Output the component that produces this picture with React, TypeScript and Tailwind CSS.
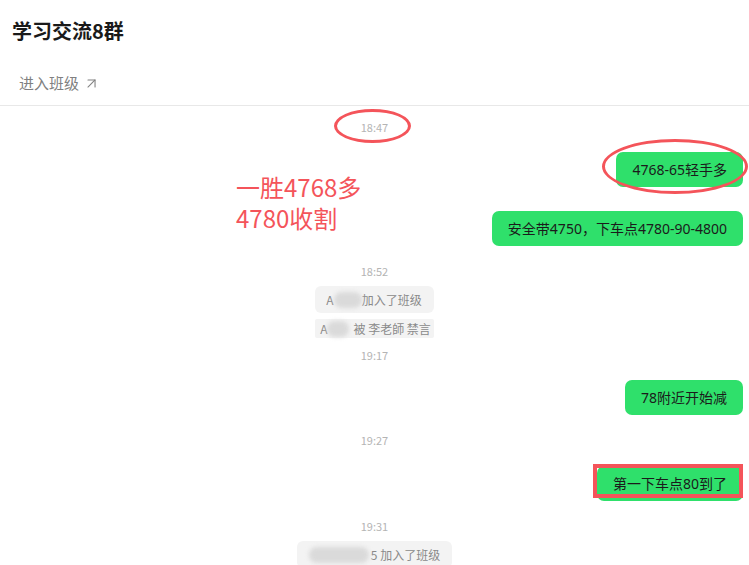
import { ArrowUpRight } from "lucide-react";

const font = { fontFamily: '"Noto Sans CJK SC", "Noto Sans", sans-serif' };
const bubbleFont = { fontFamily: '"Noto Sans", "Noto Sans CJK SC", sans-serif' };

function Time({ t, className = "" }: { t: string; className?: string }) {
  return (
    <div className={`text-center text-[11px] leading-4 text-[#b4b4b4] ${className}`}>{t}</div>
  );
}

function Bubble({ text, className = "" }: { text: string; className?: string }) {
  return (
    <div className={`flex justify-end pr-[6px] ${className}`}>
      <div
        className="flex h-[35px] items-center rounded-[7px] bg-[#2fe06b] px-[16px] text-[14px] text-[#1b1b1b]"
        style={bubbleFont}
      >
        {text}
      </div>
    </div>
  );
}

function Blur({ w }: { w: number }) {
  return (
    <span
      className="inline-block h-[16px] rounded-full bg-[#dadada] blur-[2px]"
      style={{ width: w }}
    />
  );
}

export default function App() {
  return (
    <div className="relative h-[565px] w-full overflow-hidden bg-white" style={font}>
      <div className="flex h-[62px] items-center pl-[12px] text-[20px] font-bold text-[#1a1a1a]">
        学习交流8群
      </div>
      <div className="flex h-[44px] items-center gap-1 border-b border-[#e8e8e8] pl-[19px] text-[15px] text-[#808080]">
        进入班级
        <ArrowUpRight size={17} strokeWidth={1.5} className="text-[#808080]" />
      </div>

      <div className="flex flex-col pt-[13px]">
        <Time t="18:47" />
        <Bubble text="4768-65轻手多" className="mt-[17px]" />
        <Bubble text="安全带4750，下车点4780-90-4800" className="mt-[24px]" />
        <Time t="18:52" className="mt-[17px]" />
        <div className="mt-[7px] flex justify-center">
          <div className="flex h-[27px] items-center rounded-[6px] bg-[#f3f3f3] pl-[11px] pr-[12px] text-[12px] text-[#8a8a8a]">
            A<Blur w={28} />加入了班级
          </div>
        </div>
        <div className="mt-[6px] flex justify-center">
          <div className="flex h-[19px] items-center rounded-[2px] bg-[#f3f3f3] pl-[5px] pr-[3px] text-[12px] text-[#8a8a8a]">
            A<Blur w={22} />
            <span className="ml-[4px]">被 李老師 禁言</span>
          </div>
        </div>
        <Time t="19:17" className="mt-[9px]" />
        <Bubble text="78附近开始减" className="mt-[17px]" />
        <Time t="19:27" className="mt-[17px]" />
        <Bubble text="第一下车点80到了" className="mt-[18px]" />
        <Time t="19:31" className="mt-[17px]" />
        <div className="mt-[7px] flex justify-center">
          <div className="flex h-[27px] items-center rounded-[6px] bg-[#f3f3f3] pl-[12px] pr-[12px] text-[12px] text-[#8a8a8a]">
            <Blur w={60} />
            <span className="ml-[2px]">5 加入了班级</span>
          </div>
        </div>
      </div>

      {/* annotations */}
      <div className="absolute left-[334px] top-[109px] h-[34px] w-[77px] rounded-[50%] border-[3px] border-[#f4545a]" />
      <div className="absolute left-[602px] top-[139px] h-[55px] w-[146px] rounded-[50%] border-[3px] border-[#f4545a]" />
      <div className="absolute left-[593px] top-[464px] h-[34px] w-[150px] border-[4px] border-[#f4545a]" />
      <div className="absolute left-[236px] top-[172px] flex flex-col gap-[2px] text-[24px] leading-[29px] text-[#f4545a]">
        <div>一胜4768多</div>
        <div>4780收割</div>
      </div>
    </div>
  );
}
